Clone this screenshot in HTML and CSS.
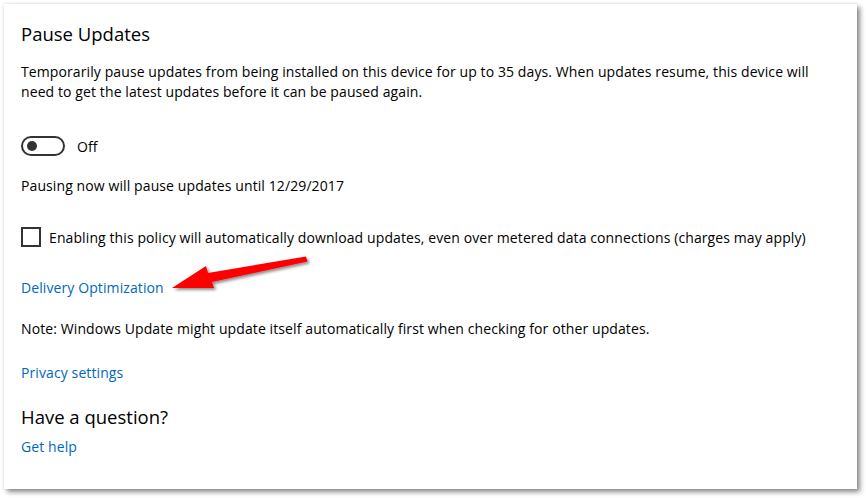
FILE: index.html
```html
<!DOCTYPE html>
<html>
<head>
<meta charset="utf-8">
<link rel="stylesheet" href="styles.css">
</head>
<body>
<div class="card">
  <h1 class="title">Pause Updates</h1>
  <p class="desc">Temporarily pause updates from being installed on this device for up to 35 days. When updates resume, this device will need to get the latest updates before it can be paused again.</p>
  <div class="toggle-row">
    <span class="toggle"><span class="knob"></span></span>
    <span class="toggle-label">Off</span>
  </div>
  <p class="line pausing">Pausing now will pause updates until 12/29/2017</p>
  <div class="check-row">
    <span class="checkbox"></span>
    <span>Enabling this policy will automatically download updates, even over metered data connections (charges may apply)</span>
  </div>
  <a class="link delivery">Delivery Optimization</a>
  <p class="line note">Note: Windows Update might update itself automatically first when checking for other updates.</p>
  <a class="link privacy">Privacy settings</a>
  <h2 class="subtitle">Have a question?</h2>
  <a class="link help">Get help</a>
</div>
<svg class="arrow" width="160" height="50" viewBox="0 0 160 50">
  <defs>
    <filter id="sh" x="-20%" y="-40%" width="140%" height="180%">
      <feDropShadow dx="2" dy="2" stdDeviation="1.5" flood-color="#000" flood-opacity="0.45"/>
    </filter>
  </defs>
  <g filter="url(#sh)" fill="#f00">
    <polygon points="136,4.5 137.5,9.5 42,30 44,36 2,36 36,14 38,21"/>
  </g>
</svg>
</body>
</html>
```
FILE: styles.css
```css
html, body {
  margin: 0;
  padding: 0;
  background: #ffffff;
}
body {
  width: 866px;
  height: 498px;
  position: relative;
  overflow: hidden;
  font-family: "Open Sans", "Noto Sans", sans-serif;
  color: #000;
}
.card {
  position: absolute;
  left: 4px;
  top: 4px;
  width: 853px;
  height: 485px;
  box-sizing: border-box;
  background: #fff;
  box-shadow: 3px 3px 5px rgba(0,0,0,0.45), 0 0 3px rgba(0,0,0,0.12);
  padding: 19px 17px 0 17px;
  display: flex;
  flex-direction: column;
  align-items: flex-start;
  font-size: 14px;
  letter-spacing: 0.1px;
}
.title {
  margin: 0;
  font-size: 18.5px;
  font-weight: 400;
  line-height: 22px;
  letter-spacing: 0;
}
.desc {
  margin: 17px 0 0 0;
  line-height: 20px;
}
.toggle-row {
  display: flex;
  align-items: center;
  margin-top: 34px;
  height: 20px;
}
.toggle {
  width: 44px;
  height: 20px;
  box-sizing: border-box;
  border: 2px solid #333;
  border-radius: 10px;
  display: flex;
  align-items: center;
  padding-left: 4px;
}
.knob {
  width: 10px;
  height: 10px;
  border-radius: 50%;
  background: #333;
}
.toggle-label {
  margin-left: 12px;
}
.line {
  margin: 0;
  line-height: 20px;
}
.pausing {
  margin-top: 20px;
}
.check-row {
  display: flex;
  align-items: center;
  margin-top: 31px;
  height: 20px;
}
.checkbox {
  width: 20px;
  height: 20px;
  box-sizing: border-box;
  border: 2px solid #333;
  margin-right: 8px;
}
.link {
  color: #0067c0;
  line-height: 20px;
  cursor: pointer;
}
.delivery {
  margin-top: 31px;
}
.note {
  margin-top: 21px;
}
.privacy {
  margin-top: 24px;
}
.subtitle {
  margin: 22px 0 0 0;
  font-size: 18.5px;
  font-weight: 400;
  line-height: 24px;
  letter-spacing: 0;
}
.help {
  margin-top: 8px;
}
.arrow {
  position: absolute;
  left: 170px;
  top: 252px;
}
```
